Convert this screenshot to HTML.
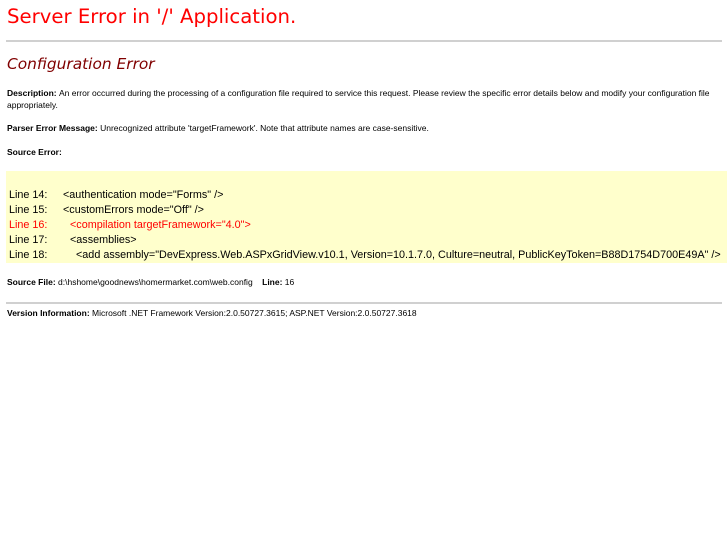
<!DOCTYPE html>
<html><head><meta charset="utf-8"><style>
body{margin:0;background:#fff;font-family:"Liberation Sans",sans-serif;color:#000;}
.a{position:absolute;white-space:nowrap;}
h1{position:absolute;left:7px;top:5px;margin:0;font:normal 19.7px "DejaVu Sans",sans-serif;color:#f00;}
h2{position:absolute;left:7px;top:55px;margin:0;font:italic 15.4px "DejaVu Sans",sans-serif;color:#800000;}
.hr{position:absolute;left:6px;width:716px;height:1px;background:#c0c0c0;}
.s{font-size:8.5px;}
.code{position:absolute;left:6px;top:171px;width:721px;height:92px;background:#ffffcc;font-size:10.8px;}
.code div{position:absolute;white-space:pre;}
.l{left:3px;}
</style></head><body>
<h1>Server Error in '/' Application.</h1>
<div class="hr" style="top:40px;height:2px;background:#d0d0d0"></div>
<h2>Configuration Error</h2>
<div class="a s" style="left:7px;top:88px"><b>Description: </b>An error occurred during the processing of a configuration file required to service this request. Please review the specific error details below and modify your configuration file</div>
<div class="a s" style="left:7px;top:100px">appropriately.</div>
<div class="a s" style="left:7px;top:123px"><b>Parser Error Message: </b>Unrecognized attribute 'targetFramework'. Note that attribute names are case-sensitive.</div>
<div class="a s" style="left:7px;top:147px"><b>Source Error:</b></div>
<div class="code">
<div class="l" style="top:18px">Line 14:</div><div style="left:57px;top:18px">&lt;authentication mode="Forms" /&gt;</div>
<div class="l" style="top:33px">Line 15:</div><div style="left:57px;top:33px">&lt;customErrors mode="Off" /&gt;</div>
<div class="l" style="top:48px;color:#f00">Line 16:</div><div style="left:64px;top:48px;color:#f00">&lt;compilation targetFramework="4.0"&gt;</div>
<div class="l" style="top:63px">Line 17:</div><div style="left:64px;top:63px">&lt;assemblies&gt;</div>
<div class="l" style="top:78px">Line 18:</div><div style="left:70px;top:78px">&lt;add assembly="DevExpress.Web.ASPxGridView.v10.1, Version=10.1.7.0, Culture=neutral, PublicKeyToken=B88D1754D700E49A" /&gt;</div>
</div>
<div class="a s" style="left:7px;top:277px"><b>Source File: </b>d:\hshome\goodnews\homermarket.com\web.config &nbsp;&nbsp; <b>Line: </b>16</div>
<div class="hr" style="top:302px;height:2px;background:#d0d0d0"></div>
<div class="a s" style="left:7px;top:308px"><b>Version Information: </b>Microsoft .NET Framework Version:2.0.50727.3615; ASP.NET Version:2.0.50727.3618</div>
</body></html>
